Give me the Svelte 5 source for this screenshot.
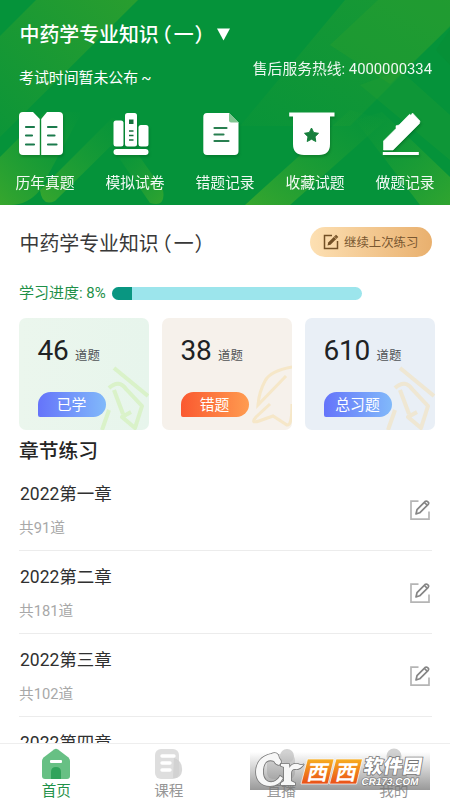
<script>
  const tools = [
    { id: 'book', label: '历年真题' },
    { id: 'shelf', label: '模拟试卷' },
    { id: 'doc', label: '错题记录' },
    { id: 'badge', label: '收藏试题' },
    { id: 'pen', label: '做题记录' }
  ];
  const stats = [
    { value: 46, label: '已学', tone: 'green' },
    { value: 38, label: '错题', tone: 'sand' },
    { value: 610, label: '总习题', tone: 'blue' }
  ];
  const chapters = [
    { title: '2022第一章', count: '共91道' },
    { title: '2022第二章', count: '共181道' },
    { title: '2022第三章', count: '共102道' },
    { title: '2022第四章', count: '' }
  ];
  const tabs = [
    { id: 'home', label: '首页' },
    { id: 'course', label: '课程' },
    { id: 'live', label: '直播' },
    { id: 'me', label: '我的' }
  ];
  const progress = 8;
</script>

<div class="app">
  <header>
    <svg class="backdrop" width="450" height="205" viewBox="0 0 450 205">
      <defs>
        <linearGradient id="lime" x1="0" y1="1" x2="1" y2="0">
          <stop offset="0" stop-color="#35a12b" stop-opacity="0.15" />
          <stop offset="1" stop-color="#35a12b" stop-opacity="0.75" />
        </linearGradient>
        <linearGradient id="limeUp" x1="0" y1="1" x2="1" y2="0">
          <stop offset="0" stop-color="#43ab2a" stop-opacity="0.8" />
          <stop offset="1" stop-color="#24a034" stop-opacity="0" />
        </linearGradient>
        <linearGradient id="limeDown" x1="1" y1="1" x2="0" y2="0">
          <stop offset="0" stop-color="#3eaa2c" stop-opacity="0.75" />
          <stop offset="1" stop-color="#24a034" stop-opacity="0" />
        </linearGradient>
      </defs>
      <path d="M36 0H138L0 137V36Z" fill="url(#lime)" />
      <path d="M345 0H450V26L350 126L240 126Z" fill="url(#lime)" opacity=".55" />
      <path d="M378 0H450V27L390 84L330 45Z" fill="#35a12b" opacity=".3" />
      <path d="M450 30V65L436 50Z" fill="#078f36" opacity=".7" />
      <path d="M0 157L45 112L82 112L40 190Q28 205 10 205H0Z" fill="url(#limeUp)" />
      <path d="M40 190L112 118L132 125L55 201Q42 207 40 190Z" fill="url(#limeUp)" />
      <path d="M110 145L150 203Q166 208 163 190L135 150Z" fill="url(#limeDown)" />
      <path d="M245 205L350 110L386 120L290 205Z" fill="url(#limeUp)" />
      <path d="M355 120L420 205H450V177L382 112Z" fill="url(#limeDown)" />
      <path d="M400 70L450 115V160L360 85Z" fill="#34a32d" opacity=".22" />
    </svg>

    <div class="heading">
      <h1>中药学专业知识<span class="open">（</span><span class="one">一</span>）</h1>
      <svg width="14" height="14" viewBox="0 0 14 14"><path d="M1 .5H14L7.500 12.500Z" fill="#fff" /></svg>
    </div>
    <div class="info">
      <span class="exam">考试时间暂未公布<i>~</i></span>
      <span class="hotline">售后服务热线: 4000000334</span>
    </div>

    <div class="tools">
      {#each tools as tool}
        <div class="tool">
          <svg class="icon" width="50" height="48" viewBox="0 0 50 48">
            {#if tool.id === 'book'}
              <path d="M8 2H18L24.800 9V45H8Q4 45 4 41V6Q4 2 8 2ZM26.200 9L32 2H44Q48 2 48 6V41Q48 45 44 45H26.200Z" fill="#fff" transform="translate(-5 0)" />
              <path d="M6 17H14M6 25.500H12M6 34.500H14M28 17H36.500M28 25.500H34.500M28 34.500H36.500" stroke="#1b7a4c" stroke-width="2.200" stroke-linecap="round" />
            {:else if tool.id === 'shelf'}
              <g fill="#fff">
                <rect x="3.500" y="10.500" width="10" height="26" rx="2.500" />
                <rect x="15" y="3" width="12" height="33.500" rx="2.500" />
                <rect x="28.500" y="15" width="10" height="21.500" rx="2.500" />
                <rect x="3.500" y="39" width="35" height="6" rx="3" />
              </g>
              <rect x="19" y="9.500" width="4.500" height="4.500" fill="#17713d" />
              <path d="M19 21H23.500M19 25.500H23.500M19 30H23.500" stroke="#17713d" stroke-width="1.500" />
            {:else if tool.id === 'doc'}
              <path d="M7 3H29L38.500 12.500V41Q38.500 45 34.500 45H7Q3.300 45 3.300 41V7Q3.300 3 7 3Z" fill="#fff" />
              <path d="M29 3L38.500 12.500H31Q29 12.500 29 10.500Z" fill="#80c590" />
              <path d="M14.500 18H26.500M14.500 24.500H23.500M14.500 31H28.500" stroke="#287f50" stroke-width="2.200" stroke-linecap="round" />
            {:else if tool.id === 'badge'}
              <path d="M-.800 2.500H44.500V6.500H40V34Q40 45 29 45H14Q3 45 3 34V6.500H-.800Z" fill="#fff" />
              <path d="M21.500 18L23.700 22.500L28.500 23.300L25 26.700L25.800 31.500L21.500 29.200L17.200 31.500L18 26.700L14.500 23.300L19.300 22.500Z" fill="#17803c" stroke="#17803c" stroke-width="1" stroke-linejoin="round" />
            {:else}
              <path d="M3.500 31L16 18.500V15.800L19 15L29.500 4.300L31 5.300L32.500 3L40 11L39.500 13.500L13 40H3.500Z" fill="#fff" stroke="#fff" stroke-width=".6" stroke-linejoin="round" />
              <rect x="2.800" y="42" width="36" height="3" fill="#fff" />
            {/if}
          </svg>
          <span>{tool.label}</span>
        </div>
      {/each}
    </div>
  </header>

  <main>
    <div class="subject">
      <h2>中药学专业知识<span class="open">（</span><span class="one">一</span>）</h2>
      <button>
        <svg width="16" height="16" viewBox="0 0 16 16" fill="none" stroke="#735026">
          <path d="M9 1.500H1.500V14.500H14.500V7" stroke-width="1.500" />
          <path d="M4.500 11.500L5.200 8.500L12 1.700L14.300 4L7.500 10.800Z" fill="#735026" stroke="none" />
          <path d="M12.500 1.200L14.800 3.500" stroke-width="1.500" />
          <path d="M11 2.700L13.300 5" stroke="#f4cf98" stroke-width=".7" />
        </svg>
        继续上次练习
      </button>
    </div>

    <div class="progress">
      <span>学习进度: {progress}%</span>
      <div class="track"><div class="fill" style="width: {progress}%"></div></div>
    </div>

    <div class="stats">
      {#each stats as stat}
        <section class={stat.tone}>
          <svg class="flourish" width="60" height="68" viewBox="0 0 60 68" fill="none">
            {#if stat.tone === 'sand'}
              <path d="M60 5Q38 9 33 19Q27 30 26 43L54 14M60 42Q60 64 55 63L41 54L27 59Q18 62 24 55L38 42" stroke="#f5dda6" stroke-width="3" opacity=".5" />
            {:else}
              <path d="M25 6L59 34M20 26Q30 17 37 27L53 44L46 66L33 55L42 50M25 28L34 52M13 68L20 48" stroke={stat.tone === 'green' ? '#ccefa5' : '#f6dfb0'} stroke-width="4" stroke-linejoin="round" opacity=".5" />
            {/if}
          </svg>
          <p><b>{stat.value}</b><small>道题</small></p>
          <span class="pill">{stat.label}</span>
        </section>
      {/each}
    </div>

    <h3>章节练习</h3>
    <ul>
      {#each chapters as chapter}
        <li>
          <div>
            <h4>{chapter.title}</h4>
            <p>{chapter.count}</p>
          </div>
          <svg width="22" height="22" viewBox="0 0 22 22" fill="none">
            <path d="M9.500 2.200H2V20.200H20V12.500" stroke="#b5b5b5" stroke-width="1.700" />
            <path d="M7 15L8 10.700L16.500 2.200Q18.200 1.500 19.500 3.500Q20 4.500 19 5.600L10.700 13.800Z M15.500 3.500L18.300 6.300" stroke="#858585" stroke-width="1.700" stroke-linejoin="round" />
          </svg>
        </li>
      {/each}
    </ul>
  </main>

  <nav>
    {#each tabs as tab}
      <div class="tab" class:active={tab.id === 'home'}>
        <svg width="30" height="32" viewBox="0 0 30 32">
          {#if tab.id === 'home'}
            <path d="M13 1.500Q15 0 17 1.500L27.500 9.500Q29 11 29 13V28Q29 31 26 31H4Q1 31 1 28V13Q1 11 2.500 9.500Z" fill="#67c084" />
            <path d="M10 31V24Q10 19 15 19Q20 19 20 24V31Z" fill="#31a35b" />
            <rect x="9" y="12" width="12" height="3" rx="1" fill="#fff" />
          {:else if tab.id === 'course'}
            <rect x="1" y="1" width="24" height="30" rx="6" fill="#dedede" />
            <path d="M20 10Q29 13 28 23Q27 31 19 30Z" fill="#cecece" opacity=".8" />
            <path d="M8 8H20M8 15H16M8 22H16" stroke="#fff" stroke-width="3.400" stroke-linecap="round" />
          {:else if tab.id === 'live'}
            <rect x="1" y="6" width="28" height="25" rx="6" fill="#dedede" />
            <circle cx="21" cy="8" r="7" fill="#d2d2d2" />
          {:else}
            <circle cx="15" cy="8" r="7.500" fill="#d2d2d2" />
            <path d="M2 31Q1 17 15 17Q29 17 28 31Z" fill="#dadada" />
          {/if}
        </svg>
        <span>{tab.label}</span>
      </div>
    {/each}
  </nav>

  <svg class="brand" width="180" height="38" viewBox="0 0 180 38">
    <defs>
      <linearGradient id="shade" x1="0" y1="0" x2="0" y2="1">
        <stop offset="0" stop-color="#777" stop-opacity="0" />
        <stop offset="1" stop-color="#777" stop-opacity=".75" />
      </linearGradient>
      <linearGradient id="fire" x1="0" y1="0" x2="0" y2="1">
        <stop offset="0" stop-color="#f7ae20" />
        <stop offset="1" stop-color="#e94f18" />
      </linearGradient>
    </defs>
    <rect width="180" height="38" fill="url(#shade)" />
    <g fill="#f7f7f7" stroke="#777" stroke-width="1.600" paint-order="stroke">
      <path d="M21 2Q28-1 29 6Q33 10 29 13Q26 13 24 9C15 6 13 14 13 20C13 27 17 31 23 30Q28 28 30 24L33 26Q29 34 20 34C11 34 6 28 6 20C6 11 11 4 21 2Z" />
      <path d="M31 12H39L39.500 16Q42 11 48 12Q52 14 54 12Q50 18 45 17Q41 17 41 22V29L45 31V33H31V31L34 29V15L31 14Z" />
    </g>
    <path d="M57.500 7H84L78 32H51Z M86 7H112.500L106.500 32H79.500Z" fill="url(#fire)" stroke="#fff" stroke-width=".7" />
    <g font-family="'Noto Sans CJK SC', sans-serif" fill="#fff">
      <text transform="translate(56 27.500) skewX(-12)" font-size="21" font-weight="700">西</text>
      <text transform="translate(84.500 27.500) skewX(-12)" font-size="21" font-weight="700">西</text>
      <text transform="translate(113 20.500) skewX(-10)" font-size="19" font-weight="900" textLength="58" stroke="#777" stroke-width="1.600" paint-order="stroke">软件园</text>
    </g>
    <text transform="translate(111 33) skewX(-10)" font-family="'Liberation Sans', sans-serif" font-size="10" font-weight="700" textLength="57" lengthAdjust="spacingAndGlyphs" fill="#fff" stroke="#777" stroke-width="1.200" paint-order="stroke">CR173.COM</text>
  </svg>
</div>

<style>
  :global(body) { margin: 0; }
  .app {
    position: relative;
    display: flex;
    flex-direction: column;
    width: 450px;
    height: 800px;
    overflow: hidden;
    background: #fff;
    color: #303030;
    font-family: Roboto, 'Noto Sans CJK SC', sans-serif;
  }
  h1, h2, h3, h4, p, ul { margin: 0; padding: 0; font-weight: 400; }
  svg { display: block; flex: none; overflow: visible; }

  header {
    position: relative;
    flex: none;
    height: 205px;
    overflow: hidden;
    background: #05933a;
    color: #fff;
  }
  .backdrop { position: absolute; inset: 0; }
  .heading, .info, .tools { position: relative; }
  .heading {
    display: flex;
    align-items: center;
    height: 34px;
    padding: 18px 0 0 19.5px;
  }
  h1, h2 { font-size: 19.9px; line-height: 34px; white-space: nowrap; width: 196px; }
  h1 { padding-top: 2px; font-weight: 500; }
  .open { margin-left: -7px; }
  .one { margin: 0 1px 0 2px; }
  .info {
    display: flex;
    justify-content: space-between;
    height: 53px;
    padding: 0 18px 0 19px;
    font-size: 14.9px;
    line-height: 20px;
    white-space: nowrap;
  }
  .exam { padding-top: 16px; }
  .exam i { margin-left: 3px; font-style: normal; }
  .hotline { padding-top: 7px; font-size: 14.8px; opacity: .93; }
  .tools { display: flex; padding-top: 5px; }
  .tool {
    display: flex;
    flex: 1;
    flex-direction: column;
    align-items: center;
    font-size: 14.8px;
    line-height: 24px;
  }
  .tool span { margin-top: 13px; opacity: .95; }
  .icon { filter: drop-shadow(1px 2px 1px rgb(0 75 25 / 30%)); }

  main { flex: 1; min-height: 0; overflow: hidden; padding: 0 18px 0 19px; }
  .subject {
    display: flex;
    align-items: center;
    justify-content: space-between;
    padding-top: 20px;
    height: 36px;
  }
  h2 { padding-top: 4px; padding-left: .5px; color: #383838; }
  button {
    display: flex;
    align-items: center;
    gap: 5px;
    width: 122px;
    height: 30px;
    margin-top: -3px;
    padding: 0 0 0 13px;
    border: 0;
    border-radius: 15px;
    background: linear-gradient(90deg, #fde0b3, #e9b06e);
    color: #795730;
    font: 12.4px Roboto, 'Noto Sans CJK SC', sans-serif;
    white-space: nowrap;
  }
  .progress { display: flex; align-items: center; height: 20px; margin-top: 22px; color: #1e9048; font-size: 15px; line-height: 20px; }
  .progress span { width: 93px; white-space: nowrap; }
  .track { width: 250px; height: 13px; border-radius: 7px; overflow: hidden; background: #9ce5ec; }
  .fill { height: 100%; background: #099681; }

  .stats { display: flex; gap: 13px; margin-top: 15px; margin-right: -3px; }
  section {
    position: relative;
    box-sizing: border-box;
    flex: 1;
    height: 112px;
    padding: 15px 0 0 18.5px;
    border-radius: 7px;
    overflow: hidden;
  }
  .green { background: linear-gradient(90deg, #ebf6ed, #e7f5ec); }
  .sand { background: #f6f1eb; }
  .blue { background: #e9eff6; }
  .flourish { position: absolute; right: 0; bottom: 0; }
  section p { position: relative; display: flex; align-items: baseline; height: 34px; padding-top: 1px; line-height: 34px; }
  section b { color: #202224; font-size: 28px; font-weight: 400; letter-spacing: -.2px; }
  section small { margin-left: 6.5px; color: #505356; font-size: 12.4px; }
  .pill {
    position: relative;
    display: block;
    width: 68px;
    height: 25px;
    margin-top: 24px;
    border-radius: 13px 13px 13px 2px;
    background: linear-gradient(90deg, #6574fa, #81b9fa);
    color: #fff;
    font-size: 14.8px;
    line-height: 26px;
    text-align: center;
  }
  .sand .pill { background: linear-gradient(90deg, #fa5930, #ff9c50); }

  h3 { margin-top: 6px; height: 30px; font-size: 19.8px; font-weight: 500; line-height: 31px; color: #252525; }
  ul { list-style: none; }
  li {
    display: flex;
    align-items: center;
    justify-content: space-between;
    box-sizing: border-box;
    height: 83px;
    padding: 2px 1px 0 0;
    border-bottom: 1px solid #ececec;
  }
  li:first-child { height: 85px; padding-top: 4px; }
  h4 { padding-left: 1px; margin-top: -1px; font-size: 17.5px; line-height: 26px; }
  li p { height: 22px; margin-top: 10px; color: #a8a8a8; font-size: 14.7px; line-height: 22px; }

  nav { display: flex; flex: none; height: 56px; border-top: 1px solid #eee; background: #fff; }
  .tab {
    display: flex;
    flex: 1;
    flex-direction: column;
    align-items: center;
    padding-top: 4px;
    color: #969696;
    font-size: 14.6px;
    line-height: 22px;
  }
  .active { color: #1f9149; }
  .brand { position: absolute; left: 250px; top: 752px; }
</style>
